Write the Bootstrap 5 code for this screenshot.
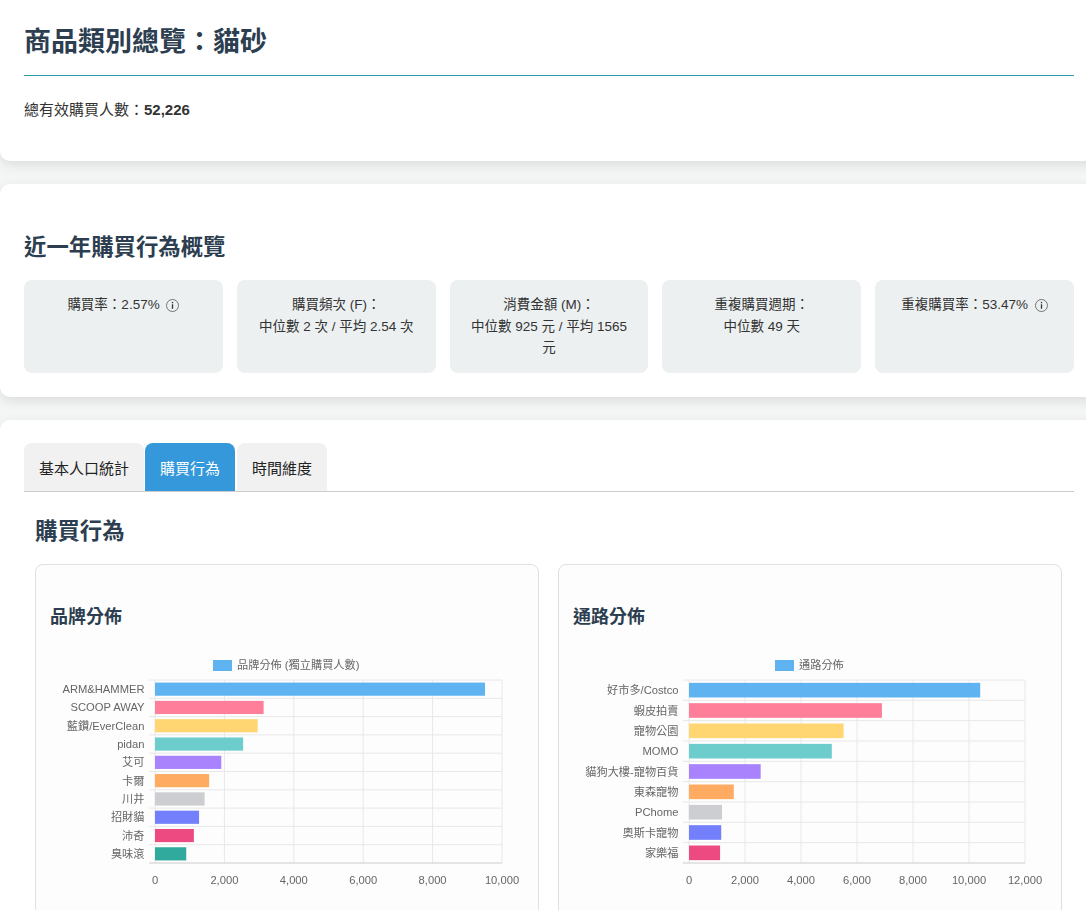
<!DOCTYPE html>
<html lang="zh-Hant">
<head>
    <meta charset="UTF-8">
    <meta name="viewport" content="width=device-width, initial-scale=1.0">
    <title>商品類別總覽：貓砂</title>
    <link href="https://cdn.jsdelivr.net/npm/bootstrap@5.3.3/dist/css/bootstrap.min.css" rel="stylesheet">
    <script defer src="https://cdn.jsdelivr.net/npm/bootstrap@5.3.3/dist/js/bootstrap.bundle.min.js"></script>
    <style>
        html, body {
            height: 910px;
            overflow: hidden;
        }

        body {
            background-color: #f4f6f6;
            color: #333;
            font-family: "Liberation Sans", "Noto Sans CJK TC", sans-serif;
            font-size: 15px;
            line-height: 1.5;
        }

        .panel {
            background-color: #fff;
            border-radius: 10px 0 0 10px;
            box-shadow: 0 4px 12px rgba(0, 0, 0, 0.1);
            margin: 0 -12px 23px 0;
            padding: 23px 24px;
        }

        .panel-head {
            height: 161px;
            border-radius: 0 0 0 10px;
        }

        .panel-overview {
            height: 213px;
            padding-top: 48px;
        }

        .panel-tabs {
            height: 600px;
            margin-bottom: 0;
        }

        h1, h2, h3, h4 {
            color: #2c3e50;
            font-weight: 700;
            margin: 0;
        }

        .page-title {
            font-size: 27px;
            line-height: 38px;
            padding-bottom: 14px;
            border-bottom: 1px solid #2f9aa8;
        }

        .total-line {
            margin: 23px 0 0;
        }

        .section-title {
            font-size: 22.4px;
            line-height: 31px;
            margin-bottom: 17px;
        }

        .stat-row {
            display: grid;
            grid-template-columns: repeat(5, 1fr);
            gap: 14px;
        }

        .stat-box {
            background-color: #ecf0f1;
            border-radius: 8px;
            height: 93px;
            padding: 14px 15px;
            text-align: center;
            font-size: 13.5px;
            line-height: 21.6px;
        }

        .info-mark {
            width: 13px;
            height: 13px;
            margin-left: 3px;
            vertical-align: -3px;
        }

        .tab-strip {
            display: flex;
            gap: 1px;
            border-bottom: 1px solid #ccc;
            height: 49px;
        }

        .tab-btn {
            background-color: #f1f1f1;
            color: #222;
            border-radius: 8px 8px 0 0;
            padding: 0 15px;
            line-height: 51px;
            height: 48px;
        }

        .tab-btn.is-active {
            background-color: #3498db;
            color: #fff;
            margin-right: 1px;
        }

        .tab-body {
            padding: 0 12px 0 11px;
        }

        .tab-title {
            font-size: 22.4px;
            line-height: 31px;
            margin: 24px 0 17px;
        }

        .chart-row {
            display: grid;
            grid-template-columns: minmax(0, 1fr) minmax(0, 1fr);
            gap: 19px;
        }

        .chart-box {
            background-color: #fdfdfd;
            border: 1px solid #e0e0e0;
            border-radius: 8px;
            height: 400px;
            padding: 39px 14px 0;
        }

        .chart-title {
            font-size: 18px;
            line-height: 26px;
        }

        .chart-svg {
            display: block;
            margin: 10px 0 0 -15px;
            filter: blur(0.3px);
        }

        .chart-svg text {
            font-family: "Liberation Sans", "Noto Sans CJK TC", sans-serif;
            font-size: 11.2px;
            fill: #666;
        }
    </style>
</head>
<body>

    <div class="panel panel-head">
        <h1 class="page-title">商品類別總覽：貓砂</h1>
        <p class="total-line">總有效購買人數：<strong>52,226</strong></p>
    </div>

    <div class="panel panel-overview">
        <h2 class="section-title">近一年購買行為概覽</h2>
        <div class="stat-row">
            <div class="stat-box">購買率：2.57%
                <svg class="info-mark" viewBox="0 0 16 16"><circle cx="8" cy="8" r="7.4" fill="none" stroke="#666" stroke-width="1.1"/><rect x="7.2" y="6.5" width="1.6" height="5.5" fill="#333"/><rect x="7.2" y="3.6" width="1.6" height="1.6" fill="#333"/></svg>
            </div>
            <div class="stat-box">購買頻次 (F)：<br>中位數 2 次 / 平均 2.54 次</div>
            <div class="stat-box">消費金額 (M)：<br>中位數 925 元 / 平均 1565 元</div>
            <div class="stat-box">重複購買週期：<br>中位數 49 天</div>
            <div class="stat-box">重複購買率：53.47%
                <svg class="info-mark" viewBox="0 0 16 16"><circle cx="8" cy="8" r="7.4" fill="none" stroke="#666" stroke-width="1.1"/><rect x="7.2" y="6.5" width="1.6" height="5.5" fill="#333"/><rect x="7.2" y="3.6" width="1.6" height="1.6" fill="#333"/></svg>
            </div>
        </div>
    </div>

    <div class="panel panel-tabs">
        <div class="tab-strip">
            <div class="tab-btn">基本人口統計</div>
            <div class="tab-btn is-active">購買行為</div>
            <div class="tab-btn">時間維度</div>
        </div>
        <div class="tab-body">
            <h3 class="tab-title">購買行為</h3>
            <div class="chart-row">
                <div class="chart-box">
                    <h4 class="chart-title">品牌分佈</h4>
                    <div id="brandChart"></div>
                </div>
                <div class="chart-box">
                    <h4 class="chart-title">通路分佈</h4>
                    <div id="channelChart"></div>
                </div>
            </div>
        </div>
    </div>

    <script>
        const colors = ["#5fb3f0", "#ff7f9a", "#ffd672", "#6dcdcd", "#a982fd", "#ffac62", "#cdced2", "#747ffc", "#ee4a82", "#2faa9c"];

        function drawChart(id, cfg) {
            const w = 490, h = 265;
            let s = `<svg class="chart-svg" width="${w}" height="${h}" viewBox="0 0 ${w} ${h}">`;
            const unit = (cfg.right - cfg.left) / cfg.max;
            const step = (cfg.bottom - cfg.top) / cfg.rows.length;

            // legend
            s += `<rect x="${cfg.legendX}" y="20" width="19" height="11" fill="${colors[0]}"/>`;
            s += `<text x="${cfg.legendX + 24}" y="29">${cfg.legend}</text>`;

            // grid
            for (let v = 0; v <= cfg.max; v += 2000) {
                const x = cfg.left + v * unit;
                s += `<line x1="${x}" y1="${cfg.top}" x2="${x}" y2="${cfg.bottom}" stroke="#e8e8e8"/>`;
                s += `<text x="${x}" y="${cfg.bottom + 21}" text-anchor="middle">${v.toLocaleString("en-US")}</text>`;
            }
            for (let i = 0; i <= cfg.rows.length; i++) {
                const y = cfg.top + i * step;
                s += `<line x1="${cfg.left - 6}" y1="${y}" x2="${cfg.right}" y2="${y}" stroke="${i === cfg.rows.length ? "#ccc" : "#e8e8e8"}"/>`;
            }

            // bars
            cfg.rows.forEach((row, i) => {
                const y = cfg.top + i * step;
                const pad = step * 0.14;
                s += `<rect x="${cfg.left}" y="${y + pad}" width="${row[1] * unit}" height="${step - pad * 2}" fill="${colors[i]}"/>`;
                s += `<text x="${cfg.left - 10.5}" y="${y + step / 2 + 4}" text-anchor="end">${row[0]}</text>`;
            });

            s += "</svg>";
            document.getElementById(id).innerHTML = s;
        }

        drawChart("brandChart", {
            legend: "品牌分佈 (獨立購買人數)", legendX: 178, max: 10000,
            left: 120, right: 467, top: 40, bottom: 223,
            rows: [["ARM&amp;HAMMER", 9510], ["SCOOP AWAY", 3130], ["藍鑽/EverClean", 2960], ["pidan", 2540], ["艾可", 1910], ["卡爾", 1560], ["川井", 1430], ["招財貓", 1270], ["沛奇", 1120], ["臭味滾", 900]]
        });

        drawChart("channelChart", {
            legend: "通路分佈", legendX: 217, max: 12000,
            left: 131, right: 467, top: 40, bottom: 223,
            rows: [["好市多/Costco", 10400], ["蝦皮拍賣", 6890], ["寵物公園", 5520], ["MOMO", 5100], ["貓狗大樓-寵物百貨", 2560], ["東森寵物", 1600], ["PChome", 1180], ["奧斯卡寵物", 1150], ["家樂福", 1110]]
        });
    </script>

</body>
</html>
